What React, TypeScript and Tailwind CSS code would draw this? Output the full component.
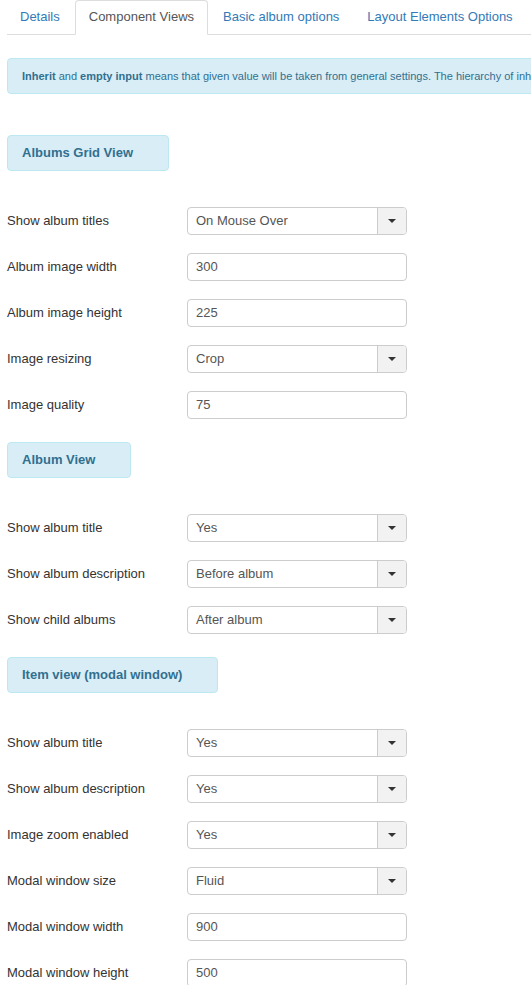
import React from "react";

type Field = { label: string; value: string; select?: boolean };

const sections: { title: string; fields: Field[] }[] = [
  {
    title: "Albums Grid View",
    fields: [
      { label: "Show album titles", value: "On Mouse Over", select: true },
      { label: "Album image width", value: "300" },
      { label: "Album image height", value: "225" },
      { label: "Image resizing", value: "Crop", select: true },
      { label: "Image quality", value: "75" },
    ],
  },
  {
    title: "Album View",
    fields: [
      { label: "Show album title", value: "Yes", select: true },
      { label: "Show album description", value: "Before album", select: true },
      { label: "Show child albums", value: "After album", select: true },
    ],
  },
  {
    title: "Item view (modal window)",
    fields: [
      { label: "Show album title", value: "Yes", select: true },
      { label: "Show album description", value: "Yes", select: true },
      { label: "Image zoom enabled", value: "Yes", select: true },
      { label: "Modal window size", value: "Fluid", select: true },
      { label: "Modal window width", value: "900" },
      { label: "Modal window height", value: "500" },
    ],
  },
];

const tabs = ["Details", "Component Views", "Basic album options", "Layout Elements Options"];

function Row({ field }: { field: Field }) {
  return (
    <div className="flex items-center h-[28px]">
      <div className="w-[180px] text-[13px] text-[#333]">{field.label}</div>
      <div className="w-[220px] h-[28px] flex border border-[#ccc] rounded-[4px] bg-white overflow-hidden">
        <div className="flex-1 flex items-center pl-[8px] text-[13px] text-[#555]">{field.value}</div>
        {field.select && (
          <div className="w-[29px] flex items-center justify-center border-l border-[#ccc] bg-[#f2f2f2]">
            <span className="w-0 h-0 border-l-[4px] border-r-[4px] border-t-[4px] border-l-transparent border-r-transparent border-t-[#333]" />
          </div>
        )}
      </div>
    </div>
  );
}

export default function App() {
  return (
    <div className="w-[531px] h-[985px] overflow-hidden bg-white pl-[7px] font-['Liberation_Sans',Arial,sans-serif]">
      <div className="w-[900px]">
        {/* Tabs */}
        <div className="flex gap-[2px] border-b border-[#ddd] h-[35px]">
          {tabs.map((t, i) =>
            i === 1 ? (
              <div
                key={t}
                className="px-[13px] pt-[7px] h-[35px] text-[13px] leading-[18px] text-[#555] bg-white border border-[#ddd] border-b-white rounded-t-[4px]"
              >
                {t}
              </div>
            ) : (
              <div key={t} className="px-[13px] pt-[8px] text-[13px] leading-[18px] text-[#337ab7]">
                {t}
              </div>
            )
          )}
        </div>

        {/* Info alert */}
        <div className="mt-[23px] h-[36px] flex items-center px-[14px] bg-[#d9edf7] border border-[#bce8f1] rounded-[4px] text-[11px] text-[#31708f] whitespace-nowrap">
          <span>
            <b>Inherit</b> and <b>empty input</b> means that given value will be taken from general settings. The hierarchy of inheritance is: general settings, album settings, item settings.
          </span>
        </div>

        {sections.map((s, si) => (
          <div key={s.title} className={si === 0 ? "mt-[41px]" : "mt-[23px]"}>
            <div className="w-fit h-[36px] flex items-center pl-[14px] pr-[35px] bg-[#d9edf7] border border-[#bce8f1] rounded-[4px] text-[13px] font-bold text-[#31708f]">
              {s.title}
            </div>
            <div className="mt-[36px] flex flex-col gap-[18px]">
              {s.fields.map((f, fi) => (
                <Row key={fi} field={f} />
              ))}
            </div>
          </div>
        ))}
      </div>
    </div>
  );
}
